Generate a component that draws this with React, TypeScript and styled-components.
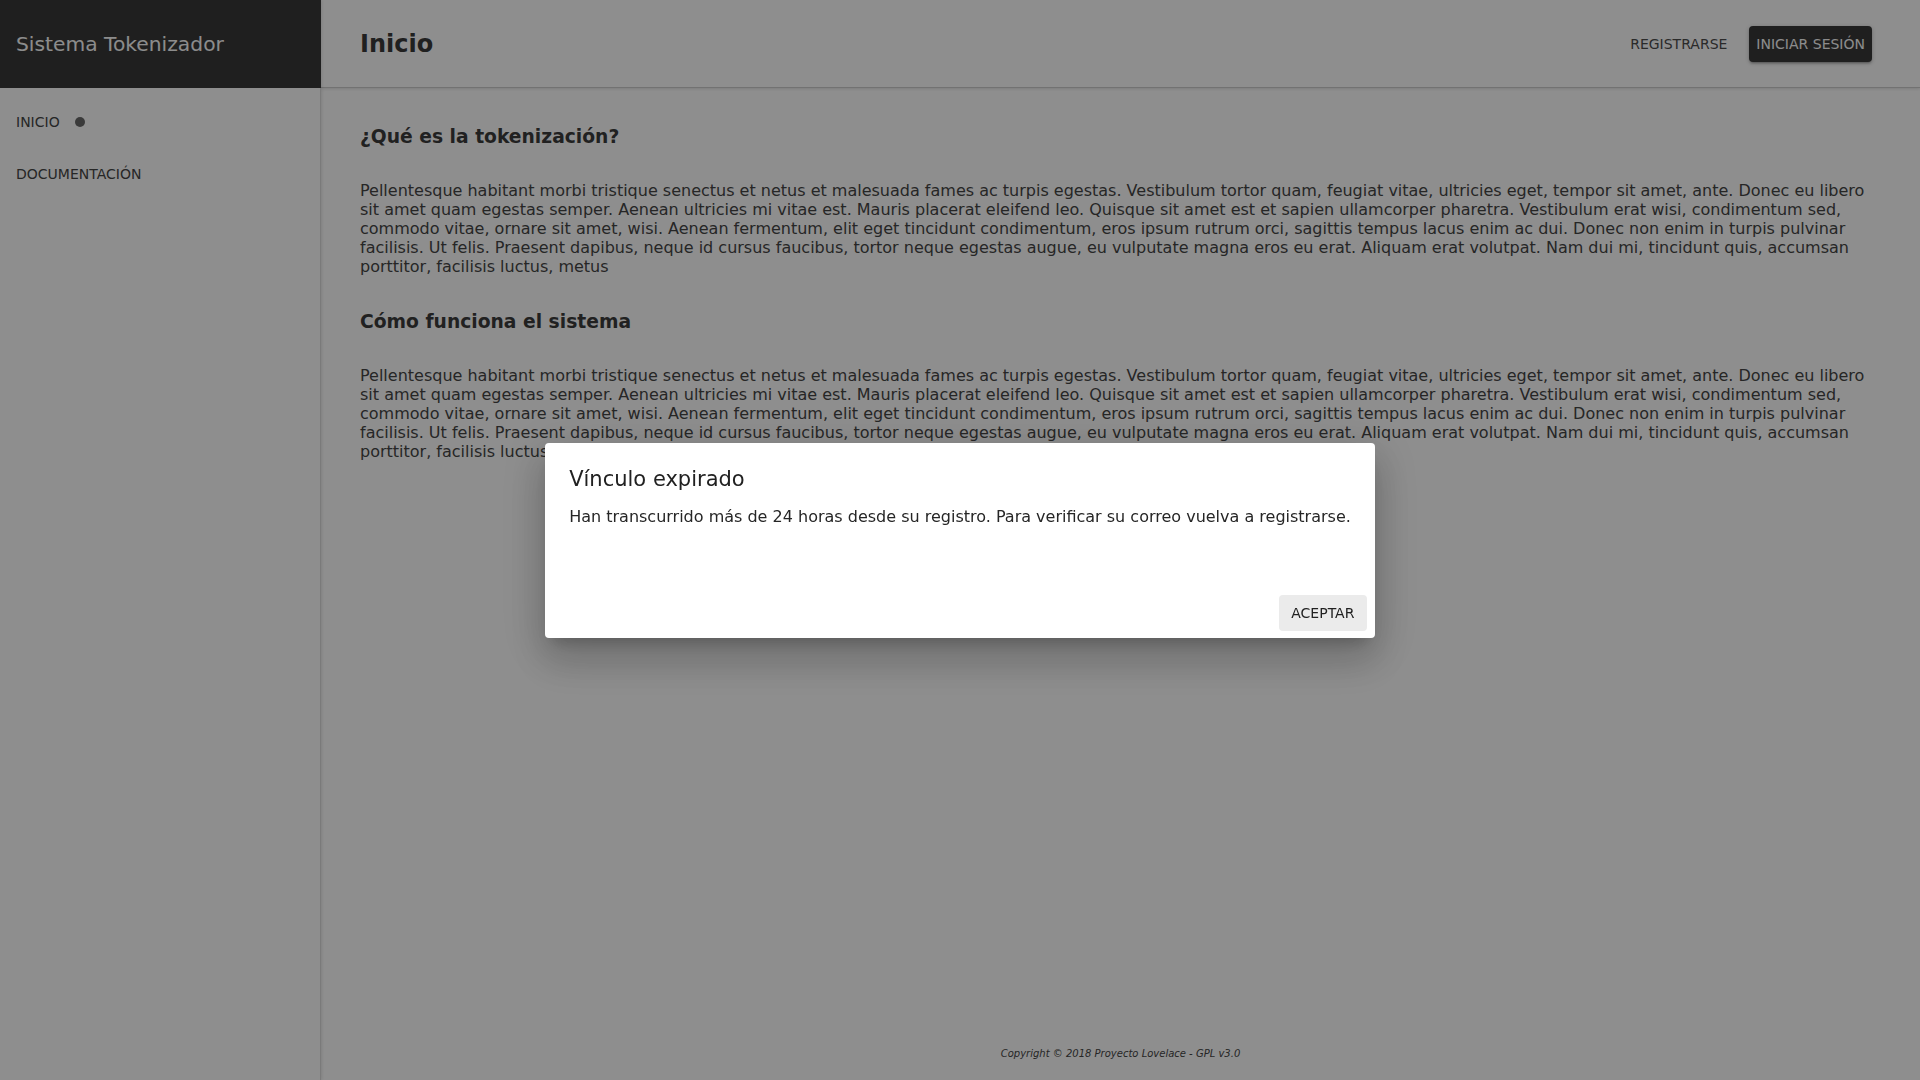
import React from "react";
import styled, { createGlobalStyle } from "styled-components";

const GlobalStyle = createGlobalStyle`
  html, body, #root {
    margin: 0;
    padding: 0;
    height: 100%;
  }
  body {
    font-family: "DejaVu Sans", "Liberation Sans", sans-serif;
    background: #fafafa;
    overflow: hidden;
  }
  * { box-sizing: border-box; }
`;

const Layout = styled.div`
  display: flex;
  width: 1920px;
  height: 1080px;
  background: #fafafa;
`;

const Sidebar = styled.aside`
  width: 321px;
  flex: none;
  display: flex;
  flex-direction: column;
  border-right: 1px solid rgba(0, 0, 0, 0.14);
  box-shadow: 1px 0 3px rgba(0, 0, 0, 0.1);
  background: #fafafa;
  z-index: 2;
`;

const Brand = styled.div`
  height: 88px;
  display: flex;
  align-items: center;
  padding: 0 16px;
  background: #373737;
  color: #f6f6f6;
  font-size: 20.25px;
  line-height: 24px;
  margin-right: -1px;
`;

const NavList = styled.nav`
  display: flex;
  flex-direction: column;
  padding-top: 8px;
`;

const NavItem = styled.a`
  height: 52px;
  display: flex;
  align-items: center;
  gap: 15px;
  padding: 0 16px;
  font-size: 14px;
  line-height: 20px;
  color: #444;
  text-transform: uppercase;
  text-decoration: none;
`;

const ActiveDot = styled.span`
  width: 10px;
  height: 10px;
  border-radius: 50%;
  background: #666;
`;

const Main = styled.main`
  flex: 1;
  display: flex;
  flex-direction: column;
  min-width: 0;
`;

const TopBar = styled.header`
  height: 88px;
  flex: none;
  display: flex;
  align-items: center;
  justify-content: space-between;
  padding: 0 48px 0 39px;
  border-bottom: 1px solid rgba(0, 0, 0, 0.2);
  box-shadow: 0 1px 3px rgba(0, 0, 0, 0.12);
`;

const PageTitle = styled.h1`
  margin: 0;
  font-size: 24px;
  line-height: 28px;
  font-weight: 700;
  color: #393939;
`;

const Actions = styled.div`
  display: flex;
  align-items: center;
  gap: 15px;
`;

const HeaderButton = styled.button<{ $raised?: boolean }>`
  height: 36px;
  padding: 0 7px;
  border: none;
  border-radius: 4px;
  font-family: inherit;
  font-size: 14px;
  text-transform: uppercase;
  cursor: pointer;
  background: ${(p) => (p.$raised ? "#373737" : "transparent")};
  color: ${(p) => (p.$raised ? "#f6f6f6" : "#4a4a4a")};
  box-shadow: ${(p) =>
    p.$raised
      ? "0 1px 5px rgba(0,0,0,0.2), 0 2px 2px rgba(0,0,0,0.14), 0 3px 1px -2px rgba(0,0,0,0.12)"
      : "none"};
`;

const Content = styled.section`
  flex: 1;
  padding: 38px 40px 0 39px;
`;

const SectionTitle = styled.h2`
  margin: 0 0 33px;
  font-size: 18.72px;
  line-height: 22px;
  font-weight: 700;
  color: #3a3a3a;
`;

const Paragraph = styled.p`
  margin: 0 0 35px;
  font-size: 16px;
  line-height: 19px;
  color: #444;
`;

const Footer = styled.footer`
  padding: 0 0 20px;
  text-align: center;
  font-size: 10px;
  line-height: 12px;
  font-style: italic;
  color: #444;
`;

const Backdrop = styled.div`
  position: fixed;
  inset: 0;
  background: rgba(0, 0, 0, 0.432);
  display: flex;
  align-items: center;
  justify-content: center;
  z-index: 10;
`;

const Dialog = styled.div`
  background: #fff;
  border-radius: 4px;
  display: flex;
  flex-direction: column;
  box-shadow: 0 11px 15px -7px rgba(0, 0, 0, 0.2),
    0 24px 38px 3px rgba(0, 0, 0, 0.14), 0 9px 46px 8px rgba(0, 0, 0, 0.12);
`;

const DialogTitle = styled.h2`
  margin: 0;
  padding: 24px 24px 16px;
  font-size: 21px;
  line-height: 24px;
  font-weight: 400;
  color: #212121;
`;

const DialogBody = styled.p`
  margin: 0;
  padding: 0 24px 60px;
  font-size: 16px;
  line-height: 20px;
  color: #262626;
  white-space: nowrap;
`;

const DialogActions = styled.div`
  display: flex;
  justify-content: flex-end;
  margin: 8px 4px 7px;
`;

const DialogButton = styled.button`
  min-width: 88px;
  height: 36px;
  margin: 0 4px;
  padding: 0 12px;
  border: none;
  border-radius: 4px;
  background: #ebebeb;
  color: #212121;
  font-family: inherit;
  font-size: 14px;
  text-transform: uppercase;
  cursor: pointer;
`;

const LOREM =
  "Pellentesque habitant morbi tristique senectus et netus et malesuada fames ac turpis egestas. Vestibulum tortor quam, feugiat vitae, ultricies eget, tempor sit amet, ante. Donec eu libero sit amet quam egestas semper. Aenean ultricies mi vitae est. Mauris placerat eleifend leo. Quisque sit amet est et sapien ullamcorper pharetra. Vestibulum erat wisi, condimentum sed, commodo vitae, ornare sit amet, wisi. Aenean fermentum, elit eget tincidunt condimentum, eros ipsum rutrum orci, sagittis tempus lacus enim ac dui. Donec non enim in turpis pulvinar facilisis. Ut felis. Praesent dapibus, neque id cursus faucibus, tortor neque egestas augue, eu vulputate magna eros eu erat. Aliquam erat volutpat. Nam dui mi, tincidunt quis, accumsan porttitor, facilisis luctus, metus";

const sections = [
  { title: "¿Qué es la tokenización?", text: LOREM },
  { title: "Cómo funciona el sistema", text: LOREM },
];

export default function App() {
  return (
    <>
      <GlobalStyle />
      <Layout>
        <Sidebar>
          <Brand>Sistema Tokenizador</Brand>
          <NavList>
            <NavItem href="#">
              Inicio
              <ActiveDot />
            </NavItem>
            <NavItem href="#">Documentación</NavItem>
          </NavList>
        </Sidebar>
        <Main>
          <TopBar>
            <PageTitle>Inicio</PageTitle>
            <Actions>
              <HeaderButton>Registrarse</HeaderButton>
              <HeaderButton $raised>Iniciar sesión</HeaderButton>
            </Actions>
          </TopBar>
          <Content>
            {sections.map((s) => (
              <React.Fragment key={s.title}>
                <SectionTitle>{s.title}</SectionTitle>
                <Paragraph>{s.text}</Paragraph>
              </React.Fragment>
            ))}
          </Content>
          <Footer>Copyright © 2018 Proyecto Lovelace - GPL v3.0</Footer>
        </Main>
      </Layout>
      <Backdrop>
        <Dialog role="dialog">
          <DialogTitle>Vínculo expirado</DialogTitle>
          <DialogBody>
            Han transcurrido más de 24 horas desde su registro. Para verificar su
            correo vuelva a registrarse.
          </DialogBody>
          <DialogActions>
            <DialogButton>Aceptar</DialogButton>
          </DialogActions>
        </Dialog>
      </Backdrop>
    </>
  );
}
